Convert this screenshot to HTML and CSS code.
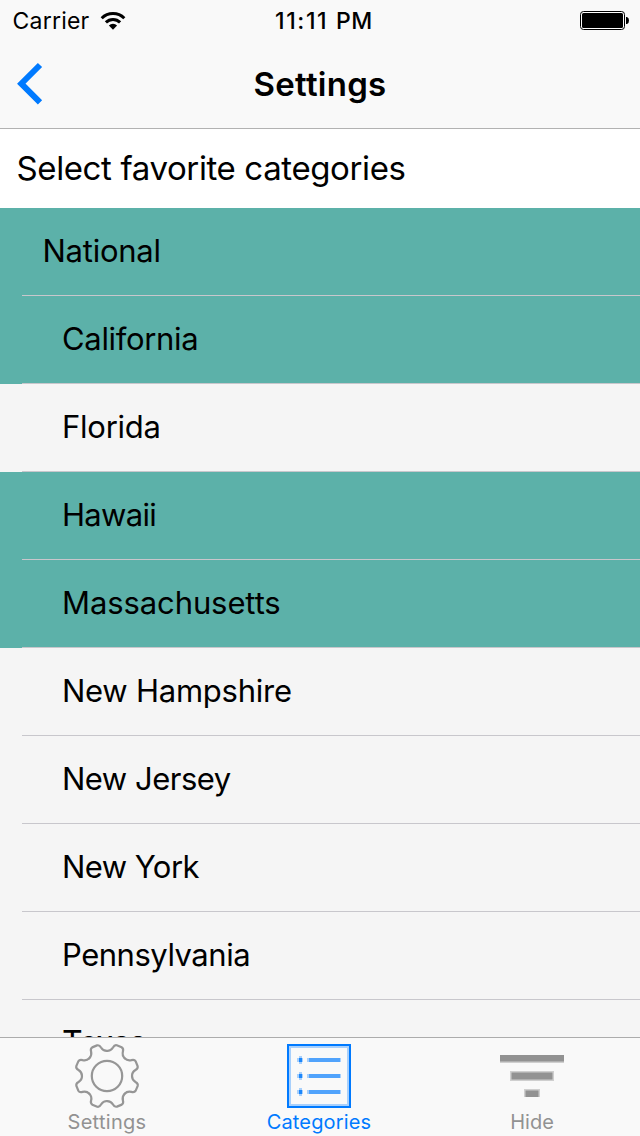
FILE: index.html
```html
<!DOCTYPE html>
<html lang="en">
<head>
<meta charset="utf-8">
<title>Settings</title>
<link rel="stylesheet" href="styles.css">
</head>
<body>
<div class="screen">
  <header class="top">
    <div class="status">
      <div class="status-left">
        <span class="carrier">Carrier</span>
        <svg class="wifi" width="26" height="20" viewBox="0 0 26 20">
          <path d="M1.7 7.2A16 16 0 0 1 24.3 7.2M5.9 11.4A10 10 0 0 1 20.1 11.4" fill="none" stroke="#000" stroke-width="3"/>
          <path d="M13 18.7L8.900 14.4A5.900 5.900 0 0 1 17.1 14.4Z"/>
        </svg>
      </div>
      <span class="time">11:11 <span class="meridiem">PM</span></span>
      <div class="status-right">
        <svg class="battery" width="49" height="19" viewBox="0 0 49 19">
          <rect x=".5" y=".5" width="44" height="18" rx="3" fill="#fff" stroke="#000"/>
          <rect x="2" y="2" width="41" height="15" rx="1.5"/>
          <path d="M46 6H47Q49 6.600 49 9.500T47 13H46Z"/>
        </svg>
      </div>
    </div>
    <nav class="nav">
      <svg class="back" width="30" height="44" viewBox="0 0 30 44"><path d="M24 3L5.300 21.700L24 40.400" fill="none" stroke="#007aff" stroke-width="6"/></svg>
      <h1 class="title">Settings</h1>
    </nav>
  </header>
  <main class="content">
    <h2 class="heading">Select favorite categories</h2>
    <ul class="list">
      <li class="row root on"><span class="t-national">National</span></li>
      <li class="row on"><span class="t-california">California</span></li>
      <li class="row"><span class="t-florida">Florida</span></li>
      <li class="row on"><span class="t-hawaii">Hawaii</span></li>
      <li class="row on"><span class="t-massachusetts">Massachusetts</span></li>
      <li class="row"><span class="t-hampshire">New Hampshire</span></li>
      <li class="row"><span class="t-jersey">New Jersey</span></li>
      <li class="row"><span class="t-york">New York</span></li>
      <li class="row"><span class="t-pennsylvania">Pennsylvania</span></li>
      <li class="row"><span class="t-texas">Texas</span></li>
    </ul>
  </main>
  <footer class="tabs">
    <div class="tab">
      <svg width="68" height="68" viewBox="-34 -34 68 68" fill="none" stroke="#969696" stroke-width="2.200" stroke-linecap="round">
        <defs><path id="tooth" d="M0-25C2.500-25 4.500-26 6-28.500Q7.500-31.300 9.800-30.700L14.600-28.700Q16.800-27.400 15.900-24.400C15.200-21.600 15.900-19.400 17.700-17.700"/></defs>
        <use href="#tooth"/><use href="#tooth" transform="rotate(45)"/><use href="#tooth" transform="rotate(90)"/><use href="#tooth" transform="rotate(135)"/><use href="#tooth" transform="rotate(180)"/><use href="#tooth" transform="rotate(225)"/><use href="#tooth" transform="rotate(270)"/><use href="#tooth" transform="rotate(315)"/>
        <circle r="15.200"/>
      </svg>
      <span class="label l-settings">Settings</span>
    </div>
    <div class="tab active">
      <svg width="68" height="68" viewBox="0 0 68 68">
        <path d="M2 2H66V66H2Z" fill="#007aff"/>
        <path d="M4 4H64V64H4Z" fill="#a8d0fc"/>
        <path d="M6 6H62V62H6Z" fill="#f9f9f9"/>
        <g fill="#a8d0fc"><path d="M12 16h6v4h-6zM14 14h3v8h-3zM12 32h6v4h-6zM14 30h3v8h-3zM12 48h6v4h-6zM14 46h3v8h-3zM22 16h34v4H22zM22 32h34v4H22zM22 48h34v4H22z"/></g>
        <path d="M14 16h3v4h-3zM14 32h3v4h-3zM14 48h3v4h-3z" fill="#1c87fb"/>
        <path d="M24 16h31v4H24zM24 32h31v4H24zM24 48h31v4H24z" fill="#51a3fc"/>
      </svg>
      <span class="label l-categories">Categories</span>
    </div>
    <div class="tab">
      <svg width="68" height="68" viewBox="0 0 68 68">
        <path d="M2 13H66V21H2ZM12 29H56V39H12ZM26 47H42V55H26Z" fill="#cfcfcf"/>
        <path d="M2 13H66V19.500H2ZM13.500 30.500H54.500V37.500H13.500ZM27.500 48.500H40.500V55H27.500Z" fill="#929292"/>
      </svg>
      <span class="label l-hide">Hide</span>
    </div>
  </footer>
</div>
</body>
</html>
```
FILE: styles.css
```css
* { box-sizing: border-box; }
body { margin: 0; font-family: Inter, "Liberation Sans", sans-serif; color: #000; }
.screen { display: flex; flex-direction: column; width: 640px; height: 1136px; overflow: hidden; background: #f5f5f5; }
svg { display: block; flex: none; }

.top { flex: none; height: 129px; background: #f9f9f9; border-bottom: 1px solid #b2b2b2; }
.status { display: grid; grid-template-columns: 1fr auto 1fr; align-items: center; height: 41px; padding: 0 11px 0 12px; font-size: 23px; line-height: 42px; }
.status-left { display: flex; align-items: center; gap: 10.5px; }
.wifi { margin-bottom: 1px; }
.battery { margin-bottom: 1px; }
.carrier { letter-spacing: 0.2px; padding-left: 0.6px; }
.status-right { display: flex; justify-content: flex-end; }
.time { font-weight: 500; letter-spacing: 1.6px; padding-left: 7px; white-space: nowrap; }
.meridiem { letter-spacing: 0.6px; }
.nav { display: grid; grid-template-columns: 1fr auto 1fr; align-items: center; height: 87px; padding: 0 16px; }
.back { margin-bottom: 1px; }
.title { margin: 0; font-size: 33px; font-weight: 600; line-height: 87px; letter-spacing: 0.25px; }

.content { flex: 1; min-height: 0; overflow: hidden; }
.heading { margin: 0; height: 79px; padding-left: 16.5px; background: #fff; font-size: 33px; font-weight: 400; line-height: 79px; letter-spacing: -0.38px; white-space: nowrap; }
.list { margin: 0; padding: 0; list-style: none; }
.row { display: flex; height: 88px; background: #f5f5f5; font-size: 31px; line-height: 86px; }
.row::before { content: ""; width: 22px; }
.row span { flex: 1; padding-left: 40px; border-bottom: 1px solid #c8c7cc; white-space: nowrap; }
.row.root span { padding-left: 20.5px; }
.row.on { background: #5cb1a9; }
.t-national { letter-spacing: -0.25px; }
.t-california { letter-spacing: -0.33px; }
.t-florida { letter-spacing: -0.25px; }
.t-hawaii { letter-spacing: -0.7px; }
.t-massachusetts { letter-spacing: -0.1px; }
.t-hampshire { letter-spacing: -0.25px; }
.t-jersey { letter-spacing: -0.5px; }
.t-york { letter-spacing: -0.55px; }
.t-pennsylvania { letter-spacing: -0.48px; }
.row .t-texas { font-size: 32px; letter-spacing: -1px; }

.tabs { display: grid; grid-template-columns: 214px 210px 216px; flex: none; height: 99px; padding-top: 4px; background: #f9f9f9; border-top: 1px solid #acacac; }
.tab { display: flex; flex-direction: column; align-items: center; color: #929292; }
.tab.active { color: #007aff; }
.label { font-size: 20px; line-height: 24px; }
.l-settings { letter-spacing: 0.3px; }
.l-categories { letter-spacing: 0.15px; }
```
